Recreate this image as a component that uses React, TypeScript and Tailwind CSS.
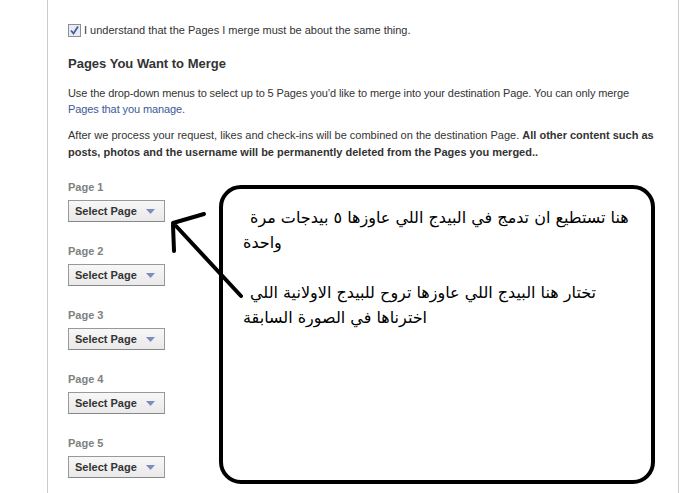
import React from 'react';

const pages = [1, 2, 3, 4, 5];

function SelectButton() {
  return (
    <button
      type="button"
      className="flex h-[22px] w-[97px] items-center border border-[#999] border-b-[#888] bg-gradient-to-b from-[#f7f7f7] to-[#e9e9e9] pl-[6px] text-[11px] font-bold text-[#333]"
    >
      <span>Select Page</span>
      <svg width="9" height="5" viewBox="0 0 9 5" className="ml-[9px]">
        <path d="M0 0 L9 0 L4.5 5 Z" fill="#7a8db8" />
      </svg>
    </button>
  );
}

function CheckBox() {
  return (
    <svg width="13" height="13" viewBox="0 0 13 13" className="shrink-0">
      <rect x="0.5" y="0.5" width="12" height="12" fill="#e8ebf2" stroke="#8f8f8f" />
      <path d="M3 6.5 L5.5 9.5 L10 2.5" fill="none" stroke="#3e5ea8" strokeWidth="1.8" />
    </svg>
  );
}

export default function App() {
  return (
    <div
      className="relative h-[493px] w-[682px] overflow-hidden bg-white text-[#333]"
      style={{ fontFamily: '"Liberation Sans", Arial, sans-serif' }}
    >
      <div className="ml-[47px] h-full w-[632px] border-x border-[#ccc] pl-[20px] pt-[23px]">
        {/* agreement */}
        <label className="flex items-center gap-[3px] text-[11px] leading-[14px]">
          <CheckBox />
          <span>I understand that the Pages I merge must be about the same thing.</span>
        </label>

        <h2 className="mt-[19px] text-[13px] font-bold leading-[16px]">Pages You Want to Merge</h2>

        <p className="mt-[13px] pr-[30px] text-[11px] leading-[16px] tracking-[-0.1px]">
          Use the drop-down menus to select up to 5 Pages you’d like to merge into your destination Page. You can only merge{' '}
          <a className="text-[#3b5998]">Pages that you manage.</a>
        </p>

        <p className="mt-[10px] pr-[8px] text-[11px] leading-[17px]">
          After we process your request, likes and check-ins will be combined on the destination Page.{' '}
          <b>All other content such as posts, photos and the username will be permanently deleted from the Pages you merged..</b>
        </p>

        <div className="mt-[19px] flex flex-col gap-[22px]">
          {pages.map((n) => (
            <div key={n} className="flex flex-col gap-[6px]">
              <div className="text-[11px] font-bold leading-[14px] text-[#808080]">Page {n}</div>
              <SelectButton />
            </div>
          ))}
        </div>
      </div>

      {/* annotation box */}
      <div className="absolute left-[219px] top-[185px] h-[299px] w-[436px] rounded-[22px] border-[4px] border-black bg-white">
        <div
          dir="rtl"
          className="ml-[20px] mt-[16px] text-left text-[16px] leading-[25px] text-black"
          style={{ fontFamily: '"DejaVu Sans", Arial, sans-serif' }}
        >
          <div className="pl-[7px]">هنا تستطيع ان تدمج في البيدج اللي عاوزها ٥ بيدجات مرة</div>
          <div>واحدة</div>
          <div>&nbsp;</div>
          <div className="pl-[7px]">تختار هنا البيدج اللي عاوزها تروح للبيدج الاولانية اللي</div>
          <div>اخترناها في الصورة السابقة</div>
        </div>
      </div>

      {/* hand-drawn arrow */}
      <svg className="pointer-events-none absolute left-0 top-0" width="682" height="493">
        <g stroke="black" strokeWidth="4" strokeLinecap="round" fill="none">
          <path d="M176 226 L241 296" />
          <path d="M173 223 L204 214" />
          <path d="M173 225 L174 251" />
        </g>
      </svg>
    </div>
  );
}
